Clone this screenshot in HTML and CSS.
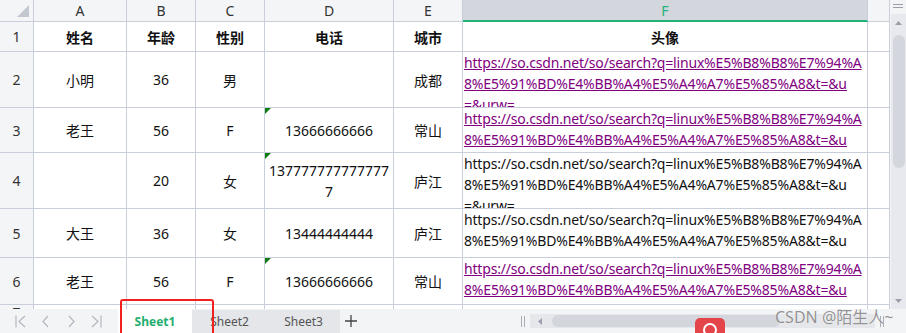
FILE: index.html
```html
<!DOCTYPE html>
<html lang="zh-CN">

<head>
    <meta charset="UTF-8">
    <title>Sheet1</title>
    <link rel="stylesheet" href="styles.css">
</head>

<body>
    <div class="app">
        <div class="main">
            <div class="sheet">
                <!-- column headers -->
                <div class="cell head corner">
                    <svg width="12" height="12" viewBox="0 0 12 12"><polygon points="12,0 12,12 0,12" fill="#c3c7cf" /></svg>
                </div>
                <div class="cell head">A</div>
                <div class="cell head">B</div>
                <div class="cell head">C</div>
                <div class="cell head">D</div>
                <div class="cell head">E</div>
                <div class="cell head active">F</div>
                <div class="cell head"></div>

                <!-- row 1 -->
                <div class="cell head">1</div>
                <div class="cell title">姓名</div>
                <div class="cell title">年龄</div>
                <div class="cell title">性别</div>
                <div class="cell title">电话</div>
                <div class="cell title">城市</div>
                <div class="cell title">头像</div>
                <div class="cell"></div>

                <!-- row 2 -->
                <div class="cell head">2</div>
                <div class="cell">小明</div>
                <div class="cell">36</div>
                <div class="cell">男</div>
                <div class="cell"></div>
                <div class="cell">成都</div>
                <div class="cell url"><a href="#"><span>https://so.csdn.net/so/search?q=linux%E5%B8%B8%E7%94%A</span><span>8%E5%91%BD%E4%BB%A4%E5%A4%A7%E5%85%A8&amp;t=&amp;u</span><span>=&amp;urw=</span></a></div>
                <div class="cell"></div>

                <!-- row 3 -->
                <div class="cell head">3</div>
                <div class="cell">老王</div>
                <div class="cell">56</div>
                <div class="cell">F</div>
                <div class="cell flag">13666666666</div>
                <div class="cell">常山</div>
                <div class="cell url"><a href="#"><span>https://so.csdn.net/so/search?q=linux%E5%B8%B8%E7%94%A</span><span>8%E5%91%BD%E4%BB%A4%E5%A4%A7%E5%85%A8&amp;t=&amp;u</span><span>=&amp;urw=</span></a></div>
                <div class="cell"></div>

                <!-- row 4 -->
                <div class="cell head">4</div>
                <div class="cell"></div>
                <div class="cell">20</div>
                <div class="cell">女</div>
                <div class="cell flag wrap">137777777777777<br>7</div>
                <div class="cell">庐江</div>
                <div class="cell url"><span>https://so.csdn.net/so/search?q=linux%E5%B8%B8%E7%94%A</span><span>8%E5%91%BD%E4%BB%A4%E5%A4%A7%E5%85%A8&amp;t=&amp;u</span><span>=&amp;urw=</span></div>
                <div class="cell"></div>

                <!-- row 5 -->
                <div class="cell head">5</div>
                <div class="cell">大王</div>
                <div class="cell">36</div>
                <div class="cell">女</div>
                <div class="cell">13444444444</div>
                <div class="cell">庐江</div>
                <div class="cell url"><span>https://so.csdn.net/so/search?q=linux%E5%B8%B8%E7%94%A</span><span>8%E5%91%BD%E4%BB%A4%E5%A4%A7%E5%85%A8&amp;t=&amp;u</span><span>=&amp;urw=</span></div>
                <div class="cell"></div>

                <!-- row 6 -->
                <div class="cell head">6</div>
                <div class="cell">老王</div>
                <div class="cell">56</div>
                <div class="cell">F</div>
                <div class="cell flag">13666666666</div>
                <div class="cell">常山</div>
                <div class="cell url"><a href="#"><span>https://so.csdn.net/so/search?q=linux%E5%B8%B8%E7%94%A</span><span>8%E5%91%BD%E4%BB%A4%E5%A4%A7%E5%85%A8&amp;t=&amp;u</span><span>=&amp;urw=</span></a></div>
                <div class="cell"></div>

                <!-- row 7 (cut off) -->
                <div class="cell head top">7</div>
                <div class="cell"></div>
                <div class="cell"></div>
                <div class="cell"></div>
                <div class="cell"></div>
                <div class="cell"></div>
                <div class="cell"></div>
                <div class="cell"></div>
            </div>

            <div class="vscroll">
                <div class="grip">
                    <svg width="10" height="4" viewBox="0 0 10 4"><path d="M0 0.5H10M0 3.5H10" stroke="#9aa0ab" stroke-width="1" /></svg>
                </div>
                <div class="vtrack">
                    <svg width="7" height="4" viewBox="0 0 7 4"><polygon points="3.5,0 7,4 0,4" fill="#9aa0ab" /></svg>
                    <div class="vthumb"></div>
                    <div class="fill"></div>
                    <svg width="7" height="4" viewBox="0 0 7 4"><polygon points="0,0 7,0 3.5,4" fill="#9aa0ab" /></svg>
                </div>
            </div>
        </div>

        <div class="tabbar">
            <div class="nav">
                <span class="nav-btn"><svg width="12" height="13" viewBox="0 0 12 13"><path d="M1 0.5V12.5M10 1L4 6.5L10 12" fill="none" stroke="#b3b7c1" stroke-width="1.2" /></svg></span>
                <span class="nav-btn"><svg width="12" height="13" viewBox="0 0 12 13"><path d="M8 1L3 6.5L8 12" fill="none" stroke="#b3b7c1" stroke-width="1.2" /></svg></span>
                <span class="nav-btn"><svg width="12" height="13" viewBox="0 0 12 13"><path d="M4 1L9 6.5L4 12" fill="none" stroke="#b3b7c1" stroke-width="1.2" /></svg></span>
                <span class="nav-btn"><svg width="12" height="13" viewBox="0 0 12 13"><path d="M2 1L8 6.5L2 12M11 0.5V12.5" fill="none" stroke="#b3b7c1" stroke-width="1.2" /></svg></span>
            </div>
            <div class="tab active">Sheet1</div>
            <div class="tab s2">Sheet2</div>
            <div class="tab s3">Sheet3</div>
            <div class="plus">
                <svg width="12" height="12" viewBox="0 0 12 12"><path d="M6 0V12M0 6H12" stroke="#444" stroke-width="1.3" /></svg>
            </div>
            <div class="spacer"></div>
            <div class="hscroll">
                <span class="sep"></span>
                <div class="htrack">
                    <svg width="4" height="7" viewBox="0 0 4 7"><polygon points="0,3.5 4,0 4,7" fill="#9aa0ab" /></svg>
                    <div class="hthumb"></div>
                </div>
                <span class="sep"></span>
            </div>
        </div>

        <!-- overlays on the screenshot -->
        <div class="mark"></div>
        <div class="csdn-btn">
            <svg width="16" height="12" viewBox="0 0 16 12"><circle cx="8" cy="9" r="6" fill="none" stroke="#fff" stroke-width="2" /></svg>
        </div>
        <div class="watermark">CSDN @陌生人~</div>
    </div>
</body>

</html>
```

FILE: styles.css
```css
* {
    box-sizing: border-box;
}

body {
    margin: 0;
    background: #fff;
    color: #111;
    font-family: "Noto Sans", "Noto Sans CJK SC", sans-serif;
    font-size: 14px;
}

.app {
    position: relative;
    width: 906px;
    height: 333px;
    overflow: hidden;
}

.main {
    display: flex;
    height: 309px;
}

.sheet {
    display: grid;
    grid-template-columns: 34px 93px 69px 69px 129px 69px 405px 22px;
    grid-template-rows: 22px 30px 56px 45px 56px 49px 47px 30px;
    flex-shrink: 0;
    width: 890px;
    height: 309px;
    overflow: hidden;
}

.cell {
    position: relative;
    display: flex;
    align-items: center;
    justify-content: center;
    text-align: center;
    overflow: hidden;
    border-right: 1px solid #c9cedb;
    border-bottom: 1px solid #c9cedb;
}

.head {
    background: #f4f5f7;
    color: #333;
}

.head.active {
    background: #d3d6dd;
    color: #22b27a;
    border-bottom: 2px solid #22b27a;
}

.head.top {
    align-items: flex-start;
    line-height: 14px;
    padding-top: 1px;
}

.corner {
    align-items: flex-end;
    justify-content: flex-end;
    padding: 0 4px 4px 0;
}

.title {
    font-weight: bold;
}

.wrap {
    line-height: 21px;
}

.flag::before {
    content: "";
    position: absolute;
    left: 0;
    top: 0;
    border-top: 6px solid #0e7c12;
    border-right: 6px solid transparent;
}

.url {
    display: block;
    text-align: left;
    white-space: nowrap;
    line-height: 21px;
    letter-spacing: -0.18px;
    padding-left: 1px;
}

.url span {
    display: block;
}

.url a {
    color: #800080;
    text-decoration: underline;
}

/* vertical scrollbar */
.vscroll {
    display: flex;
    flex-direction: column;
    flex-shrink: 0;
    width: 16px;
    background: #f3f4f6;
}

.grip {
    display: flex;
    align-items: center;
    justify-content: center;
    height: 14px;
    padding-bottom: 2px;
}

.vtrack {
    flex: 1;
    display: flex;
    flex-direction: column;
    align-items: center;
    margin-left: 1px;
    padding: 7px 0 6px;
    background: #e8e9ee;
}

.vthumb {
    width: 12px;
    height: 133px;
    margin-top: 10px;
    border-radius: 6px;
    background: #d3d6dd;
}

.fill {
    flex: 1;
}

/* sheet tabs */
.tabbar {
    display: flex;
    height: 24px;
    background: #f3f4f6;
}

.nav {
    display: flex;
    align-items: center;
    width: 118px;
    padding-left: 8px;
}

.nav-btn {
    display: flex;
    justify-content: center;
    width: 25px;
}

.tab {
    display: flex;
    align-items: center;
    justify-content: center;
    margin-top: 1px;
    background: #e4e6ea;
    color: #555;
    font-size: 12px;
}

.tab.active {
    width: 74px;
    margin-top: 0;
    background: #fff;
    color: #1fae6e;
    font-weight: bold;
}

.tab.s2 {
    width: 75px;
}

.tab.s3 {
    width: 73px;
}

.plus {
    display: flex;
    align-items: center;
    padding-left: 5px;
}

.spacer {
    flex: 1;
}

.hscroll {
    display: flex;
    align-items: center;
    width: 385px;
    padding-right: 22px;
}

.sep {
    width: 4px;
    height: 11px;
    border-left: 1px solid #a9adb6;
    border-right: 1px solid #a9adb6;
}

.htrack {
    display: flex;
    align-items: center;
    width: 345px;
    height: 14px;
    margin: 0 5px;
    padding-left: 8px;
    background: #e6e7eb;
}

.hthumb {
    width: 228px;
    height: 12px;
    margin-left: 10px;
    border-radius: 6px;
    background: #d3d6dd;
}

/* annotations */
.mark {
    position: absolute;
    left: 120px;
    top: 299px;
    width: 94px;
    height: 40px;
    border: 2px solid #f2211d;
    border-radius: 3px;
}

.csdn-btn {
    position: absolute;
    left: 695px;
    top: 318px;
    width: 30px;
    height: 20px;
    display: flex;
    justify-content: center;
    padding-top: 3px;
    border-radius: 5px;
    background: #e4454b;
}

.watermark {
    position: absolute;
    left: 775px;
    top: 304px;
    color: rgba(110, 110, 110, 0.75);
    font-family: "Noto Sans", "Noto Sans CJK SC", sans-serif;
    font-size: 16px;
    white-space: nowrap;
    text-shadow: 0 0 1px #fff;
}
```
